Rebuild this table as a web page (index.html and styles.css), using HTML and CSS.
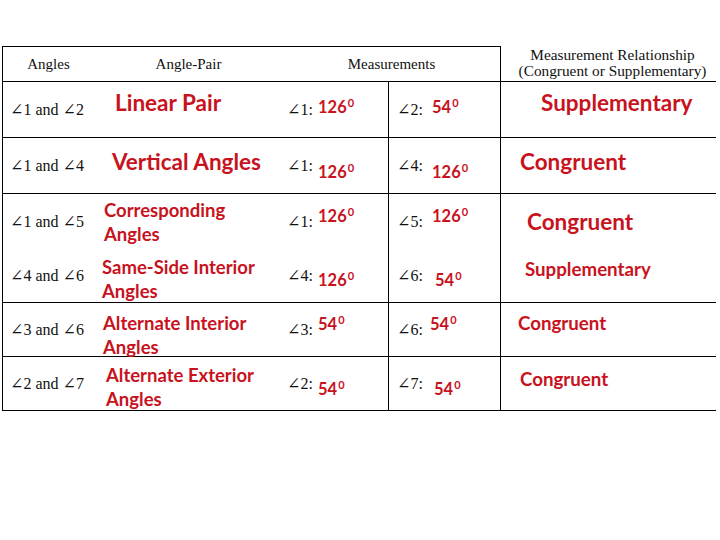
FILE: index.html
```html
<!DOCTYPE html>
<html>
<head>
<meta charset="utf-8">
<link rel="stylesheet" href="styles.css">
</head>
<body>
<div class="table">
  <div class="row head">
    <div class="cell c1 top">Angles</div>
    <div class="cell c2 top">Angle-Pair</div>
    <div class="cell cm top">Measurements</div>
    <div class="cell c5">Measurement Relationship<br>(Congruent or Supplementary)</div>
  </div>

  <div class="row r1">
    <div class="cell c1">∠1 and ∠2</div>
    <div class="cell c2"><span class="pair big">Linear Pair</span></div>
    <div class="cell c3"><span class="lab">∠1:</span><span class="val">126<span class="deg">0</span></span></div>
    <div class="cell c4"><span class="lab">∠2:</span><span class="val">54<span class="deg">0</span></span></div>
    <div class="cell c5"><span class="rel big">Supplementary</span></div>
  </div>

  <div class="row r2">
    <div class="cell c1">∠1 and ∠4</div>
    <div class="cell c2"><span class="pair big">Vertical Angles</span></div>
    <div class="cell c3"><span class="lab">∠1:</span><span class="val">126<span class="deg">0</span></span></div>
    <div class="cell c4"><span class="lab">∠4:</span><span class="val">126<span class="deg">0</span></span></div>
    <div class="cell c5"><span class="rel big">Congruent</span></div>
  </div>

  <div class="row r3">
    <div class="cell c1">∠1 and ∠5</div>
    <div class="cell c2"><span class="pair">Corresponding<br>Angles</span></div>
    <div class="cell c3"><span class="lab">∠1:</span><span class="val">126<span class="deg">0</span></span></div>
    <div class="cell c4"><span class="lab">∠5:</span><span class="val">126<span class="deg">0</span></span></div>
    <div class="cell c5"><span class="rel big">Congruent</span></div>
  </div>

  <div class="row r4">
    <div class="cell c1">∠4 and ∠6</div>
    <div class="cell c2"><span class="pair">Same-Side Interior<br>Angles</span></div>
    <div class="cell c3"><span class="lab">∠4:</span><span class="val">126<span class="deg">0</span></span></div>
    <div class="cell c4"><span class="lab">∠6:</span><span class="val">54<span class="deg">0</span></span></div>
    <div class="cell c5"><span class="rel small">Supplementary</span></div>
  </div>

  <div class="row r5">
    <div class="cell c1">∠3 and ∠6</div>
    <div class="cell c2"><span class="pair">Alternate Interior<br>Angles</span></div>
    <div class="cell c3"><span class="lab">∠3:</span><span class="val">54<span class="deg">0</span></span></div>
    <div class="cell c4"><span class="lab">∠6:</span><span class="val">54<span class="deg">0</span></span></div>
    <div class="cell c5"><span class="rel small">Congruent</span></div>
  </div>

  <div class="row r6">
    <div class="cell c1">∠2 and ∠7</div>
    <div class="cell c2"><span class="pair">Alternate Exterior<br>Angles</span></div>
    <div class="cell c3"><span class="lab">∠2:</span><span class="val">54<span class="deg">0</span></span></div>
    <div class="cell c4"><span class="lab">∠7:</span><span class="val">54<span class="deg">0</span></span></div>
    <div class="cell c5"><span class="rel small">Congruent</span></div>
  </div>
</div>
</body>
</html>
```

FILE: styles.css
```css
html, body {
  margin: 0;
  padding: 0;
  background: #ffffff;
}

body {
  font-family: "Liberation Serif", "DejaVu Serif", serif;
  color: #111111;
  width: 720px;
  height: 540px;
  overflow: hidden;
}

.table {
  display: grid;
  grid-template-columns: 92px 189px 105px 112px 216px;
  grid-template-rows: 36px 56px 56px 55px 54px 54px 54px;
  width: 714px;
  margin: 46px 0 0 2px;
}

.row {
  display: contents;
}

.cell {
  box-sizing: border-box;
  display: flex;
  align-items: center;
  border-bottom: 1px solid #000;
  font-size: 16px;
  white-space: nowrap;
}

.r3 .cell {
  border-bottom: none;
}

.top {
  border-top: 1px solid #000;
}

.c1 {
  border-left: 1px solid #000;
  padding-left: 7px;
}

.c4 {
  border-left: 1px solid #000;
  padding-left: 8px;
}

.c5 {
  border-left: 1px solid #000;
}

.cm {
  grid-column: 3 / span 2;
}

/* header */
.head .cell {
  justify-content: center;
  text-align: center;
  font-size: 15px;
  line-height: 16px;
  padding-left: 0;
}

.head .c5 {
  padding-left: 8px;
  padding-bottom: 1px;
  font-size: 15.3px;
  line-height: 16px;
}

/* red content */
.pair, .rel, .val {
  font-family: Lato, "Open Sans", sans-serif;
  font-weight: 700;
  color: #c8121e;
}

.pair {
  font-size: 18.5px;
  line-height: 24px;
}

.pair.big, .rel.big {
  font-size: 22.5px;
  line-height: 26px;
}

.rel.small {
  font-size: 18.7px;
  line-height: 22px;
}

.val {
  font-size: 16.5px;
  line-height: 19px;
}

.deg {
  font-size: 11px;
  vertical-align: 6px;
  margin-left: 1px;
}

.lab {
  display: inline-block;
}

.c3 {
  padding-left: 4px;
}

.c3 .lab {
  width: 31px;
}

.c4 .lab {
  width: 35px;
}

/* per-row placement */
.r1 .c2 { padding-left: 21px; }
.r2 .c2 { padding-left: 18px; }
.r3 .c2 { padding-left: 10px; }
.r4 .c2 { padding-left: 8px; }
.r5 .c2 { padding-left: 9px; }
.r6 .c2 { padding-left: 12px; }

.r1 .pair { margin-bottom: 13px; }
.r2 .pair { margin-bottom: 7px; }
.r4 .pair { margin-top: 7px; }
.r5 .pair { margin-top: 11px; }
.r6 .pair { margin-top: 7px; }

.r1 .c5 { padding-left: 40px; }
.r2 .c5 { padding-left: 19px; }
.r3 .c5 { padding-left: 26px; }
.r4 .c5 { padding-left: 24px; }
.r5 .c5 { padding-left: 17px; }
.r6 .c5 { padding-left: 19px; }

.r1 .rel { margin-bottom: 13px; }
.r2 .rel { margin-bottom: 7px; }
.r4 .rel { margin-bottom: 13px; }
.r5 .rel { margin-bottom: 13px; }
.r6 .rel { margin-bottom: 9px; }

.r1 .val { margin-bottom: 9px; }
.r2 .val { margin-top: 9px; }
.r3 .val { margin-bottom: 16px; }
.r4 .val { margin-top: 5px; }
.r5 .val { margin-bottom: 15px; }
.r6 .val { margin-top: 7px; }

.r4 .c4 .val { margin-left: 3px; }
.r5 .c4 .val { margin-left: -2px; }
.r6 .c4 .val { margin-left: 2px; }
```
